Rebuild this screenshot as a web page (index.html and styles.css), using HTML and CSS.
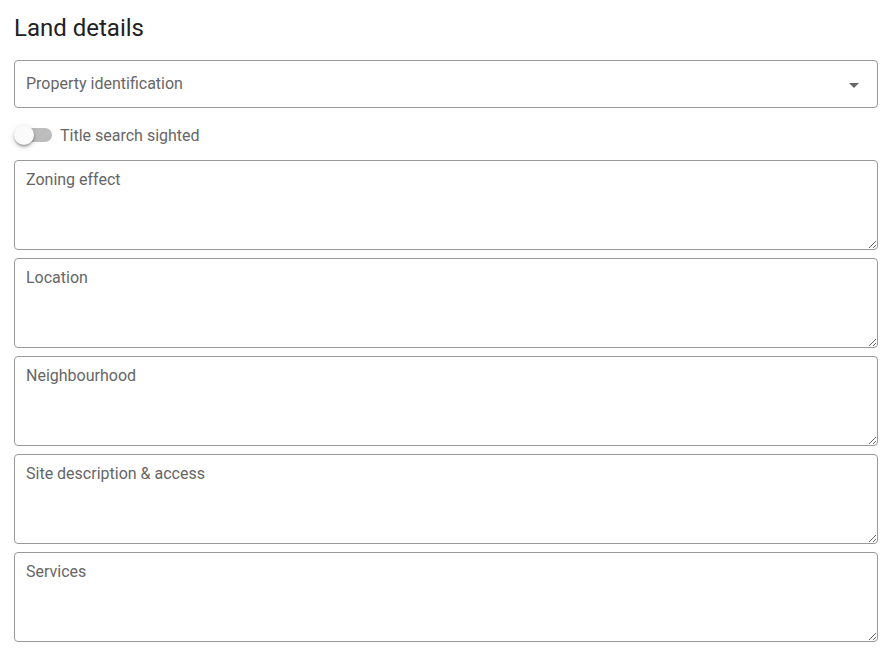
FILE: index.html
```html
<!DOCTYPE html>
<html>
<head>
<meta charset="utf-8">
<link rel="stylesheet" href="styles.css">
</head>
<body>
<div class="page">
  <h1 class="title">Land details</h1>
  <div class="select">
    <span class="select-label">Property identification</span>
    <svg class="select-arrow" width="24" height="24" viewBox="0 0 24 24"><path d="M7 10l5 5 5-5z" fill="#666"/></svg>
  </div>
  <label class="switch-row">
    <span class="switch"><span class="track"></span><span class="thumb"></span></span>
    <span class="switch-label">Title search sighted</span>
  </label>
  <div class="fields">
    <textarea class="area" placeholder="Zoning effect"></textarea>
    <textarea class="area" placeholder="Location"></textarea>
    <textarea class="area" placeholder="Neighbourhood"></textarea>
    <textarea class="area" placeholder="Site description &amp; access"></textarea>
    <textarea class="area" placeholder="Services"></textarea>
  </div>
</div>
</body>
</html>
```
FILE: styles.css
```css
* { box-sizing: border-box; }
body {
  margin: 0;
  background: #fff;
  font-family: Roboto, "Liberation Sans", sans-serif;
}
.page {
  padding: 14px 13px 0 14px;
}
.title {
  margin: 0 0 18px;
  font-size: 24px;
  line-height: 28px;
  font-weight: 400;
  color: #212121;
}
.select {
  height: 48px;
  border: 1px solid #9a9a9a;
  border-radius: 4px;
  display: flex;
  align-items: center;
  justify-content: space-between;
  padding: 0 11px 1px 11px;
}
.select-label {
  font-size: 16px;
  color: #666;
}
.select-arrow { display: block; margin-top: 2px; }
.switch-row {
  display: flex;
  align-items: center;
  height: 32px;
  margin: 11px 0 9px;
}
.switch {
  position: relative;
  width: 38px;
  height: 20px;
  flex: none;
}
.track {
  position: absolute;
  left: 2px;
  top: 3px;
  width: 36px;
  height: 14px;
  border-radius: 7px;
  background: #bdbdbd;
}
.thumb {
  position: absolute;
  left: 0;
  top: 0;
  width: 20px;
  height: 20px;
  border-radius: 50%;
  background: #fafafa;
  box-shadow: 0 2px 2px -1px rgba(0,0,0,.25), 0 2px 3px 0 rgba(0,0,0,.18), 0 2px 6px 0 rgba(0,0,0,.14);
}
.switch-label {
  margin-left: 8px;
  font-size: 16px;
  color: #666;
}
.fields {
  display: flex;
  flex-direction: column;
  gap: 8px;
}
.area {
  display: block;
  width: 100%;
  height: 90px;
  margin: 0;
  border: 1px solid #9a9a9a;
  border-radius: 4px;
  padding: 9px 11px;
  font-family: Roboto, "Liberation Sans", sans-serif;
  font-size: 16px;
  color: #333;
  background: #fff;
  outline: none;
}
.area::placeholder {
  color: #666;
  opacity: 1;
}
```
